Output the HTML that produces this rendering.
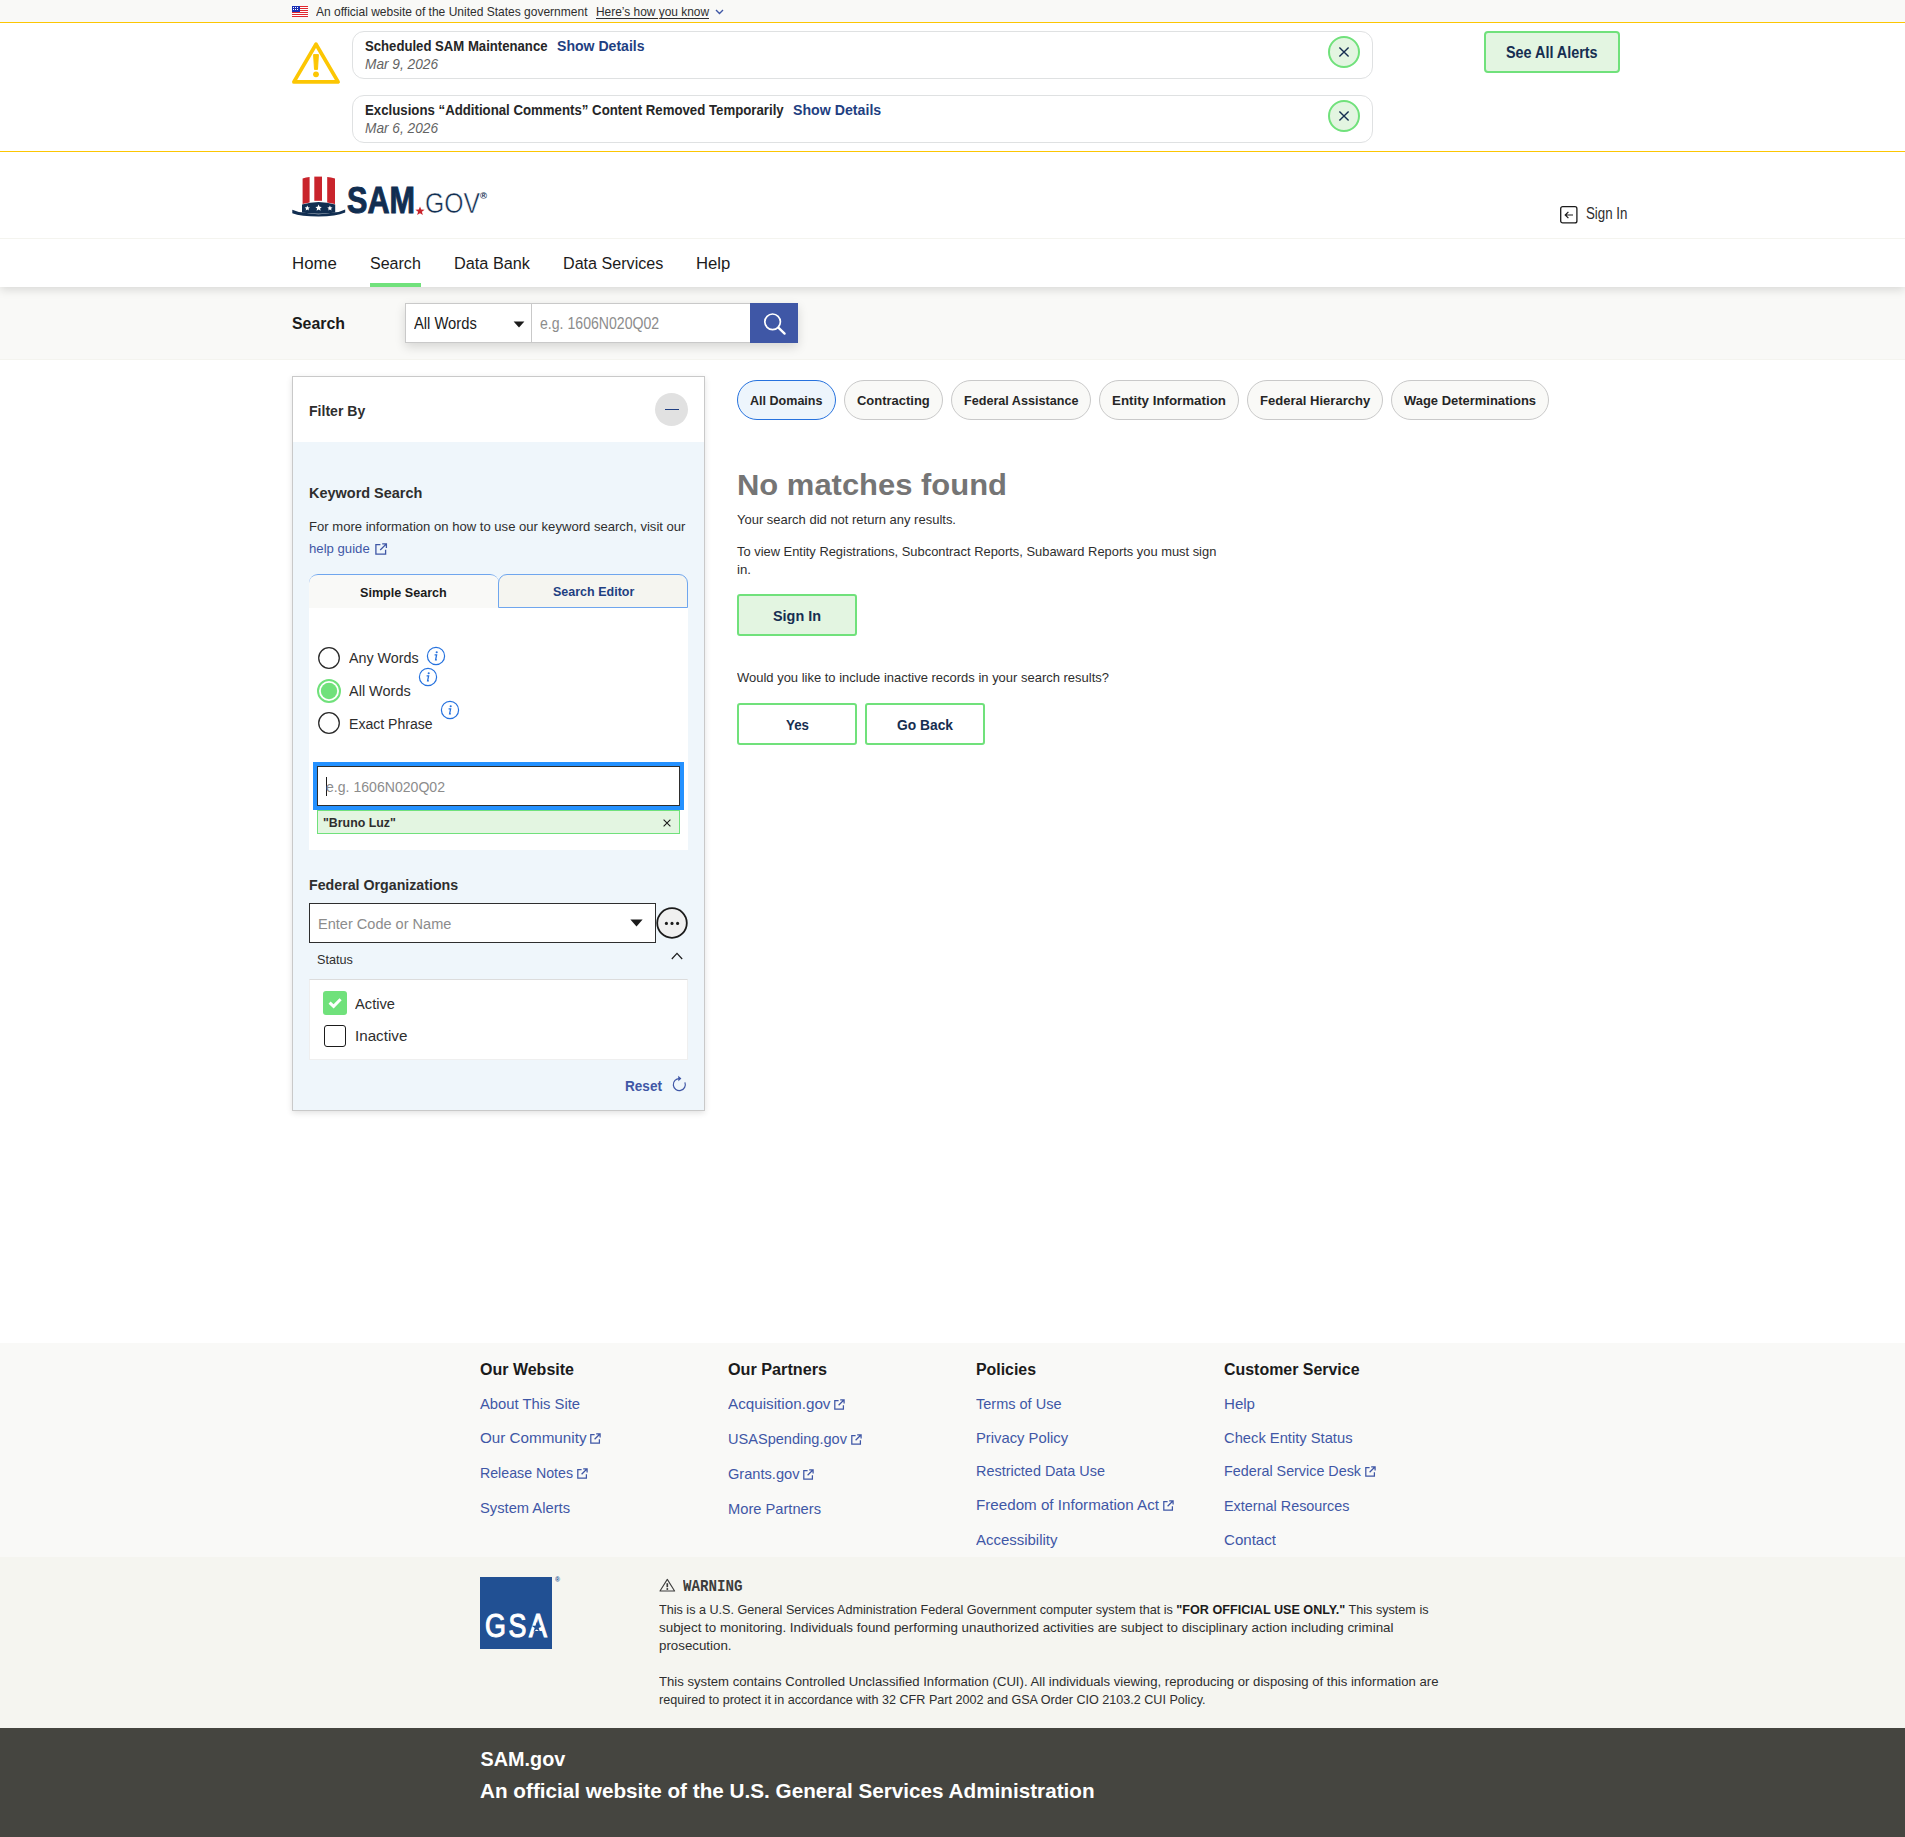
<!DOCTYPE html>
<html lang="en">
<head>
<meta charset="utf-8">
<title>SAM.gov | Search</title>
<style>
html,body{margin:0;padding:0}
body{width:1905px;height:1837px;position:relative;overflow:hidden;background:#fff;
font-family:"Liberation Sans", sans-serif;color:#1b1b1b}
#p div,#p svg,#p span{position:absolute;box-sizing:border-box}
#p span{white-space:nowrap;line-height:1;transform-origin:0 0;display:block}
#p svg{overflow:visible}
#p u{text-decoration-thickness:1px;text-underline-offset:2px}
</style>
</head>
<body>
<div id="p">
<div style="left:0px;top:0px;width:1905px;height:22px;background:#f9f9f7"></div>
<svg style="left:292px;top:6px" width="16" height="11" viewBox="0 0 16 11">
<rect width="16" height="11" fill="#fff"/>
<g fill="#e0282f"><rect y="0" width="16" height="1"/><rect y="2" width="16" height="1"/><rect y="4" width="16" height="1"/><rect y="6" width="16" height="1"/><rect y="8" width="16" height="1"/><rect y="10" width="16" height="1"/></g>
<rect width="8" height="6" fill="#1b2fb5"/>
<g fill="#fff"><rect x="1" y="1" width="1" height="1"/><rect x="3" y="1" width="1" height="1"/><rect x="5" y="1" width="1" height="1"/><rect x="1" y="3" width="1" height="1"/><rect x="3" y="3" width="1" height="1"/><rect x="5" y="3" width="1" height="1"/></g>
</svg>
<svg style="left:715px;top:9px" width="9" height="6" viewBox="0 0 9 6"><path d="M1 1 L4.5 4.5 L8 1" fill="none" stroke="#3f57a6" stroke-width="1.4"/></svg>
<div style="left:0px;top:22px;width:1905px;height:1px;background:#fcc603"></div>
<div style="left:0px;top:151px;width:1905px;height:1px;background:#fcc603"></div>
<svg style="left:292px;top:42px" width="48" height="42" viewBox="0 0 48 42">
<path d="M24 2.2 L46.1 39.9 L1.9 39.9 Z" fill="none" stroke="#fcc603" stroke-width="3.7" stroke-linejoin="round"/>
<path d="M21.6 12.6 H26.4 L25.5 27.4 H22.5 Z" fill="#fcc603" stroke="#fcc603" stroke-width="1" stroke-linejoin="round"/>
<circle cx="24" cy="32.3" r="2.9" fill="#fcc603"/></svg>
<div style="left:352px;top:31px;width:1021px;height:48px;border:1px solid #dfe1e2;border-radius:12px;background:#fff"></div>
<svg style="left:1328px;top:36px" width="32" height="32" viewBox="0 0 32 32">
<circle cx="16" cy="16" r="15" fill="#e3f5e1" stroke="#70e17b" stroke-width="2"/>
<path d="M11.4 11.4 L20.6 20.6 M20.6 11.4 L11.4 20.6" stroke="#162e51" stroke-width="1.4"/></svg>
<div style="left:352px;top:95px;width:1021px;height:48px;border:1px solid #dfe1e2;border-radius:12px;background:#fff"></div>
<svg style="left:1328px;top:100px" width="32" height="32" viewBox="0 0 32 32">
<circle cx="16" cy="16" r="15" fill="#e3f5e1" stroke="#70e17b" stroke-width="2"/>
<path d="M11.4 11.4 L20.6 20.6 M20.6 11.4 L11.4 20.6" stroke="#162e51" stroke-width="1.4"/></svg>
<div style="left:1484px;top:31px;width:136px;height:42px;border:2px solid #70e17b;border-radius:4px;background:#e3f5e1"></div>
<div style="left:0px;top:238px;width:1905px;height:1px;background:#f4f4ef"></div>
<svg style="left:292px;top:175.6px" width="54" height="41" viewBox="0 0 54 41">
<path d="M10.6 2.6 Q14 1.2 17.6 1.0 L17.6 26.5 Q14 27 10.6 28 Z" fill="#c9242c"/>
<path d="M22.3 0.6 L30 0.6 L30 24.8 L22.3 24.8 Z" fill="#c9242c"/>
<path d="M35.2 1.0 Q39 1.2 43 2.6 L43 28 Q39 27 35.2 26.5 Z" fill="#c9242c"/>
<path d="M10 28.6 Q26.5 23.4 43.2 28.6 L43.2 36.6 Q26.5 39 10 36.6 Z" fill="#112e51"/>
<path d="M0.3 33.8 Q6 36.4 12 36.6 Q26.5 40 41 36.6 Q47 36.4 53.2 33.4 L53.2 36.4 Q44 40.4 26.5 40.6 Q9 40.4 0.3 37.2 Z" fill="#112e51"/>
<g fill="#fff">
<path d="M15.3 29.6l.8 1.7 1.8.2-1.4 1.2.4 1.8-1.6-1-1.6 1 .4-1.8-1.4-1.2 1.8-.2z"/>
<path d="M26.6 28.6l1 2.1 2.2.3-1.7 1.5.5 2.2-2-1.2-2 1.2.5-2.2-1.7-1.5 2.2-.3z"/>
<path d="M37.9 29.6l.8 1.7 1.8.2-1.4 1.2.4 1.8-1.6-1-1.6 1 .4-1.8-1.4-1.2 1.8-.2z"/>
</g></svg>
<svg style="left:415px;top:206px" width="10" height="10" viewBox="0 0 10 10"><path d="M5 .4l1.2 3.2 3.4.1-2.7 2.1 1 3.3L5 7.2 2.1 9.1l1-3.3L.4 3.7l3.4-.1z" fill="#c9242c"/></svg>
<svg style="left:1560px;top:206px" width="18" height="18" viewBox="0 0 18 18">
<rect x=".7" y=".7" width="16.2" height="16.2" rx="2" fill="none" stroke="#1b1b1b" stroke-width="1.3"/>
<path d="M13 9 H5.4 M8.4 5.8 L5.2 9 L8.4 12.2" fill="none" stroke="#1b1b1b" stroke-width="1.2"/></svg>
<div style="left:0px;top:287px;width:1905px;height:72px;background:#f9f9f7"></div>
<div style="left:0px;top:359px;width:1905px;height:1px;background:#f4f4ef"></div>
<div style="left:0px;top:239px;width:1905px;height:48px;background:#fff;box-shadow:0 3px 9px rgba(0,0,0,.13);clip-path:inset(0 0 -30px 0)"></div>
<div style="left:370px;top:283px;width:51px;height:4px;background:#70e17b"></div>
<div style="left:405px;top:303px;width:393px;height:40px;box-shadow:0 4px 10px rgba(0,0,0,.14);background:#fff"></div>
<div style="left:405px;top:303px;width:127px;height:40px;border:1px solid #c9c9c9;background:#fff"></div>
<div style="left:531px;top:303px;width:220px;height:40px;border:1px solid #c9c9c9;background:#fff"></div>
<svg style="left:513px;top:321px" width="12" height="7" viewBox="0 0 12 7"><path d="M.6 .6 H11.4 L6 6.4 Z" fill="#1b1b1b"/></svg>
<div style="left:750px;top:303px;width:48px;height:40px;background:#3f57a6"></div>
<svg style="left:762px;top:311px" width="26" height="26" viewBox="0 0 26 26">
<circle cx="10.6" cy="10.8" r="7.8" fill="none" stroke="#fff" stroke-width="1.7"/>
<path d="M16.4 16.6 L22.6 22.6" stroke="#fff" stroke-width="2.3" stroke-linecap="round"/></svg>
<div style="left:292px;top:376px;width:413px;height:735px;border:1px solid #c9c9c9;background:#eff6fb;box-shadow:0 2px 6px rgba(0,0,0,.12)"></div>
<div style="left:293px;top:377px;width:411px;height:65px;background:#fff"></div>
<div style="left:655px;top:393px;width:33px;height:33px;border-radius:50%;background:#e1e1e1"></div>
<div style="left:664.5px;top:408.5px;width:14.5px;height:1.2px;background:#1f3f82"></div>
<svg style="left:374.5px;top:542.5px" width="13" height="12" viewBox="0 0 13 12">
<path d="M5.4 1.6 H.9 V11.1 H10.6 V6.8" fill="none" stroke="#3f57a6" stroke-width="1.3"/>
<path d="M7.2 .9 H11.4 V5 M11.4 .9 L5.2 7" fill="none" stroke="#3f57a6" stroke-width="1.3"/></svg>
<div style="left:309px;top:607px;width:379px;height:243px;background:#fff"></div>
<div style="left:309px;top:574px;width:190px;height:34px;background:#f9f9f7;border-top:1px solid #6fa6ee;border-radius:9px 9px 0 0"></div>
<div style="left:498px;top:574px;width:190px;height:34px;background:#f5f5f0;border:1px solid #6fa6ee;border-radius:9px 9px 0 0"></div>
<svg style="left:317px;top:645.5px" width="24" height="24" viewBox="0 0 24 24">
<circle cx="12" cy="12" r="10.3" fill="#fff" stroke="#2b2b2b" stroke-width="1.3"/></svg>
<svg style="left:317px;top:678.5px" width="24" height="24" viewBox="0 0 24 24">
<circle cx="12" cy="12" r="11" fill="#fff" stroke="#70e17b" stroke-width="2"/><circle cx="12" cy="12" r="8.2" fill="#70e17b"/></svg>
<svg style="left:317px;top:711px" width="24" height="24" viewBox="0 0 24 24">
<circle cx="12" cy="12" r="10.3" fill="#fff" stroke="#2b2b2b" stroke-width="1.3"/></svg>
<svg style="left:426.3px;top:646px" width="20" height="20" viewBox="0 0 20 20">
<circle cx="10" cy="10" r="8.6" fill="#fff" stroke="#2672de" stroke-width="1.2"/>
<circle cx="10.7" cy="6.2" r="1.05" fill="#2672de"/>
<path d="M8.6 8.8 H10.6 L9.6 13.8 H10.9" fill="none" stroke="#2672de" stroke-width="1.3"/></svg>
<svg style="left:418.2px;top:667px" width="20" height="20" viewBox="0 0 20 20">
<circle cx="10" cy="10" r="8.6" fill="#fff" stroke="#2672de" stroke-width="1.2"/>
<circle cx="10.7" cy="6.2" r="1.05" fill="#2672de"/>
<path d="M8.6 8.8 H10.6 L9.6 13.8 H10.9" fill="none" stroke="#2672de" stroke-width="1.3"/></svg>
<svg style="left:440px;top:700px" width="20" height="20" viewBox="0 0 20 20">
<circle cx="10" cy="10" r="8.6" fill="#fff" stroke="#2672de" stroke-width="1.2"/>
<circle cx="10.7" cy="6.2" r="1.05" fill="#2672de"/>
<path d="M8.6 8.8 H10.6 L9.6 13.8 H10.9" fill="none" stroke="#2672de" stroke-width="1.3"/></svg>
<div style="left:313px;top:762px;width:371px;height:48px;background:#2491ff"></div>
<div style="left:317px;top:766px;width:363px;height:40px;background:#fff;border:1px solid #2e2e2e"></div>
<div style="left:326px;top:777px;width:1px;height:19px;background:#1b1b1b"></div>
<div style="left:317px;top:810px;width:363px;height:24px;background:#e3f5e1;border:1px solid #70e17b"></div>
<svg style="left:663px;top:819px" width="8" height="8" viewBox="0 0 8 8"><path d="M.6 .6 L7.4 7.4 M7.4 .6 L.6 7.4" stroke="#1b1b1b" stroke-width="1.1"/></svg>
<div style="left:309px;top:903px;width:347px;height:40px;background:#fff;border:1px solid #2e2e2e"></div>
<svg style="left:629.5px;top:919px" width="13" height="8" viewBox="0 0 13 8"><path d="M.4 .4 H12.6 L6.5 7.6 Z" fill="#1b1b1b"/></svg>
<svg style="left:656px;top:907px" width="32" height="32" viewBox="0 0 32 32">
<circle cx="16" cy="16" r="14.8" fill="#f0f0f0" stroke="#1b1b1b" stroke-width="1.8"/>
<circle cx="10.4" cy="16.4" r="1.55" fill="#1b1b1b"/><circle cx="16" cy="16.4" r="1.55" fill="#1b1b1b"/><circle cx="21.6" cy="16.4" r="1.55" fill="#1b1b1b"/></svg>
<svg style="left:670.5px;top:952px" width="12" height="8" viewBox="0 0 12 8"><path d="M.8 7 L6 1.4 L11.2 7" fill="none" stroke="#1b1b1b" stroke-width="1.2"/></svg>
<div style="left:309px;top:979px;width:379px;height:81px;background:#fff;border:1px solid #efefef;border-top-color:#dcdcdc"></div>
<svg style="left:323px;top:991px" width="24" height="24" viewBox="0 0 24 24">
<rect width="24" height="24" rx="3" fill="#70e17b"/>
<path d="M6.6 11.6 L10.6 15.4 L17.6 8.2" fill="none" stroke="#fff" stroke-width="3"/></svg>
<div style="left:324px;top:1025px;width:22px;height:22px;background:#fff;border:1.6px solid #1b1b1b;border-radius:3px"></div>
<svg style="left:671.2px;top:1075px" width="16" height="18" viewBox="0 0 16 18">
<path d="M8.6 3.6 A6 6 0 1 0 13.9 7.4" fill="none" stroke="#3f57a6" stroke-width="1.2"/>
<path d="M7.2 .8 L10.4 3.6 L7.4 6.2 Z" fill="#3f57a6"/></svg>
<div style="left:737px;top:380px;width:98.5px;height:40px;border:1px solid #2672de;border-radius:20px;background:#edf5fc"></div>
<div style="left:843.8px;top:380px;width:98.8px;height:40px;border:1px solid #c9c9c9;border-radius:20px;background:#f9f9f7"></div>
<div style="left:951px;top:380px;width:140.4px;height:40px;border:1px solid #c9c9c9;border-radius:20px;background:#f9f9f7"></div>
<div style="left:1098.8px;top:380px;width:139.9px;height:40px;border:1px solid #c9c9c9;border-radius:20px;background:#f9f9f7"></div>
<div style="left:1247px;top:380px;width:136.2px;height:40px;border:1px solid #c9c9c9;border-radius:20px;background:#f9f9f7"></div>
<div style="left:1390.7px;top:380px;width:158px;height:40px;border:1px solid #c9c9c9;border-radius:20px;background:#f9f9f7"></div>
<div style="left:737px;top:594px;width:120px;height:42px;border:2px solid #70e17b;border-radius:3px;background:#e3f5e1"></div>
<div style="left:737px;top:703px;width:120px;height:42px;border:2px solid #70e17b;border-radius:3px;background:#fff"></div>
<div style="left:865px;top:703px;width:120px;height:42px;border:2px solid #70e17b;border-radius:3px;background:#fff"></div>
<div style="left:0px;top:1343px;width:1905px;height:214px;background:#f9f9f7"></div>
<div style="left:0px;top:1557px;width:1905px;height:171px;background:#f5f5f0"></div>
<div style="left:0px;top:1728px;width:1905px;height:109px;background:#454540"></div>
<svg style="left:590.3px;top:1433.4px" width="11" height="11" viewBox="0 0 11 11">
<path d="M4.6 1.5 H.8 V10.1 H9.4 V6.2" fill="none" stroke="#3f57a6" stroke-width="1.25"/>
<path d="M6.2 .8 H10.1 V4.6 M10.1 .8 L4.6 6.3" fill="none" stroke="#3f57a6" stroke-width="1.25"/></svg>
<svg style="left:576.8px;top:1468.4px" width="11" height="11" viewBox="0 0 11 11">
<path d="M4.6 1.5 H.8 V10.1 H9.4 V6.2" fill="none" stroke="#3f57a6" stroke-width="1.25"/>
<path d="M6.2 .8 H10.1 V4.6 M10.1 .8 L4.6 6.3" fill="none" stroke="#3f57a6" stroke-width="1.25"/></svg>
<svg style="left:834.3px;top:1399.1000000000001px" width="11" height="11" viewBox="0 0 11 11">
<path d="M4.6 1.5 H.8 V10.1 H9.4 V6.2" fill="none" stroke="#3f57a6" stroke-width="1.25"/>
<path d="M6.2 .8 H10.1 V4.6 M10.1 .8 L4.6 6.3" fill="none" stroke="#3f57a6" stroke-width="1.25"/></svg>
<svg style="left:850.8px;top:1434.4px" width="11" height="11" viewBox="0 0 11 11">
<path d="M4.6 1.5 H.8 V10.1 H9.4 V6.2" fill="none" stroke="#3f57a6" stroke-width="1.25"/>
<path d="M6.2 .8 H10.1 V4.6 M10.1 .8 L4.6 6.3" fill="none" stroke="#3f57a6" stroke-width="1.25"/></svg>
<svg style="left:803.3px;top:1469.4px" width="11" height="11" viewBox="0 0 11 11">
<path d="M4.6 1.5 H.8 V10.1 H9.4 V6.2" fill="none" stroke="#3f57a6" stroke-width="1.25"/>
<path d="M6.2 .8 H10.1 V4.6 M10.1 .8 L4.6 6.3" fill="none" stroke="#3f57a6" stroke-width="1.25"/></svg>
<svg style="left:1162.8px;top:1500.4px" width="11" height="11" viewBox="0 0 11 11">
<path d="M4.6 1.5 H.8 V10.1 H9.4 V6.2" fill="none" stroke="#3f57a6" stroke-width="1.25"/>
<path d="M6.2 .8 H10.1 V4.6 M10.1 .8 L4.6 6.3" fill="none" stroke="#3f57a6" stroke-width="1.25"/></svg>
<svg style="left:1364.8px;top:1466.4px" width="11" height="11" viewBox="0 0 11 11">
<path d="M4.6 1.5 H.8 V10.1 H9.4 V6.2" fill="none" stroke="#3f57a6" stroke-width="1.25"/>
<path d="M6.2 .8 H10.1 V4.6 M10.1 .8 L4.6 6.3" fill="none" stroke="#3f57a6" stroke-width="1.25"/></svg>
<div style="left:480px;top:1577px;width:72px;height:72px;background:#215093"></div>
<svg style="left:659px;top:1578px" width="17" height="14" viewBox="0 0 17 14">
<path d="M8.3 1.4 L15.6 13 H1 Z" fill="none" stroke="#3d3d3d" stroke-width="1.1" stroke-linejoin="round"/>
<path d="M8.3 5.2 V9.2" stroke="#3d3d3d" stroke-width="1.7"/><circle cx="8.3" cy="11" r="1" fill="#3d3d3d"/></svg>
<span style="left:316.00px;top:6.00px;font-size:12.1px;color:#2e2e2e;transform:scaleX(0.9931);">An official website of the United States government</span>
<span style="left:596.00px;top:6.00px;font-size:12.1px;color:#2e2e2e;transform:scaleX(0.9849);"><u>Here’s how you know</u></span>
<span style="left:365.40px;top:39.00px;font-size:14.6px;font-weight:700;color:#262626;transform:scaleX(0.9002);">Scheduled SAM Maintenance</span>
<span style="left:556.70px;top:39.00px;font-size:14.6px;font-weight:700;color:#1f3f82;transform:scaleX(0.9645);">Show Details</span>
<span style="left:365.40px;top:57.00px;font-size:14.6px;color:#636363;font-style:italic;transform:scaleX(0.9372);">Mar 9, 2026</span>
<span style="left:365.40px;top:103.00px;font-size:14.6px;font-weight:700;color:#262626;transform:scaleX(0.9064);">Exclusions “Additional Comments” Content Removed Temporarily</span>
<span style="left:792.70px;top:103.00px;font-size:14.6px;font-weight:700;color:#1f3f82;transform:scaleX(0.9711);">Show Details</span>
<span style="left:365.40px;top:121.00px;font-size:14.6px;color:#636363;font-style:italic;transform:scaleX(0.9372);">Mar 6, 2026</span>
<span style="left:1506.40px;top:45.00px;font-size:16px;font-weight:700;color:#162e51;transform:scaleX(0.8983);">See All Alerts</span>
<span style="left:346.50px;top:182.00px;font-size:37.8px;font-weight:700;color:#112e51;transform:scaleX(0.8095);-webkit-text-stroke:1px #112e51;">SAM</span>
<span style="left:425.40px;top:188.00px;font-size:30px;color:#112e51;transform:scaleX(0.8247);-webkit-text-stroke:0.55px #fff;">GOV</span>
<span style="left:480.00px;top:192.00px;font-size:9px;font-weight:700;color:#112e51;transform:scaleX(1.0541);">®</span>
<span style="left:1586.00px;top:206.00px;font-size:15.8px;color:#2e2e2e;transform:scaleX(0.8417);">Sign In</span>
<span style="left:292.40px;top:256.00px;font-size:16.7px;transform:scaleX(1.0064);">Home</span>
<span style="left:370.00px;top:256.00px;font-size:16.7px;transform:scaleX(0.9608);">Search</span>
<span style="left:454.00px;top:256.00px;font-size:16.7px;transform:scaleX(0.9753);">Data Bank</span>
<span style="left:562.70px;top:256.00px;font-size:16.7px;transform:scaleX(0.9656);">Data Services</span>
<span style="left:696.00px;top:256.00px;font-size:16.7px;">Help</span>
<span style="left:292.40px;top:316.00px;font-size:16.7px;font-weight:700;transform:scaleX(0.9520);">Search</span>
<span style="left:414.30px;top:316.00px;font-size:15.6px;transform:scaleX(0.9452);">All Words</span>
<span style="left:540.40px;top:316.00px;font-size:15.6px;color:#8c8c8c;transform:scaleX(0.9044);">e.g. 1606N020Q02</span>
<span style="left:309.30px;top:403.00px;font-size:15.2px;font-weight:700;color:#2e2e2e;transform:scaleX(0.9249);">Filter By</span>
<span style="left:309.30px;top:486.00px;font-size:14.8px;font-weight:700;color:#2e2e2e;transform:scaleX(0.9778);">Keyword Search</span>
<span style="left:309.30px;top:520.00px;font-size:13px;color:#2e2e2e;transform:scaleX(1.0059);">For more information on how to use our keyword search, visit our</span>
<span style="left:309.30px;top:542.00px;font-size:13px;color:#3f57a6;transform:scaleX(1.0117);">help guide</span>
<span style="left:359.90px;top:586.00px;font-size:13.1px;font-weight:700;transform:scaleX(0.9618);">Simple Search</span>
<span style="left:552.50px;top:585.00px;font-size:13.1px;font-weight:700;color:#1f3f82;transform:scaleX(0.9549);">Search Editor</span>
<span style="left:349.30px;top:650.00px;font-size:15.2px;color:#2e2e2e;transform:scaleX(0.9419);">Any Words</span>
<span style="left:349.30px;top:683.00px;font-size:15.2px;color:#2e2e2e;transform:scaleX(0.9536);">All Words</span>
<span style="left:349.30px;top:716.00px;font-size:15.2px;color:#2e2e2e;transform:scaleX(0.9266);">Exact Phrase</span>
<span style="left:326.40px;top:779.00px;font-size:15.4px;color:#8c8c8c;transform:scaleX(0.9148);">e.g. 1606N020Q02</span>
<span style="left:323.40px;top:817.00px;font-size:12.6px;font-weight:700;color:#2e2e2e;transform:scaleX(0.9811);">"Bruno Luz"</span>
<span style="left:309.30px;top:878.00px;font-size:14.8px;font-weight:700;color:#2e2e2e;transform:scaleX(0.9601);">Federal Organizations</span>
<span style="left:318.20px;top:916.00px;font-size:15.4px;color:#8c8c8c;transform:scaleX(0.9451);">Enter Code or Name</span>
<span style="left:317.40px;top:953.00px;font-size:13px;color:#2e2e2e;transform:scaleX(0.9713);">Status</span>
<span style="left:355.00px;top:996.00px;font-size:15.2px;color:#2e2e2e;transform:scaleX(0.9671);">Active</span>
<span style="left:355.00px;top:1028.00px;font-size:15.2px;color:#2e2e2e;">Inactive</span>
<span style="left:625.30px;top:1078.00px;font-size:15.2px;font-weight:700;color:#3f57a6;transform:scaleX(0.8943);">Reset</span>
<span style="left:750.00px;top:394.00px;font-size:13.1px;font-weight:700;color:#262626;transform:scaleX(0.9581);">All Domains</span>
<span style="left:856.80px;top:394.00px;font-size:13.1px;font-weight:700;color:#262626;transform:scaleX(0.9909);">Contracting</span>
<span style="left:964.00px;top:394.00px;font-size:13.1px;font-weight:700;color:#262626;transform:scaleX(0.9624);">Federal Assistance</span>
<span style="left:1111.80px;top:394.00px;font-size:13.1px;font-weight:700;color:#262626;transform:scaleX(1.0167);">Entity Information</span>
<span style="left:1260.00px;top:394.00px;font-size:13.1px;font-weight:700;color:#262626;transform:scaleX(0.9960);">Federal Hierarchy</span>
<span style="left:1403.70px;top:394.00px;font-size:13.1px;font-weight:700;color:#262626;transform:scaleX(0.9896);">Wage Determinations</span>
<span style="left:737.40px;top:470.00px;font-size:29.6px;font-weight:700;color:#757575;transform:scaleX(1.0459);">No matches found</span>
<span style="left:737.00px;top:514.00px;font-size:12.9px;color:#2e2e2e;transform:scaleX(1.0075);">Your search did not return any results.</span>
<span style="left:737.00px;top:546.00px;font-size:12.9px;color:#2e2e2e;">To view Entity Registrations, Subcontract Reports, Subaward Reports you must sign</span>
<span style="left:737.00px;top:564.00px;font-size:12.9px;color:#2e2e2e;transform:scaleX(1.0275);">in.</span>
<span style="left:773.20px;top:608.00px;font-size:15.4px;font-weight:700;color:#162e51;transform:scaleX(0.9354);">Sign In</span>
<span style="left:737.00px;top:672.00px;font-size:12.9px;color:#2e2e2e;transform:scaleX(1.0068);">Would you like to include inactive records in your search results?</span>
<span style="left:785.60px;top:717.00px;font-size:15.4px;font-weight:700;color:#162e51;transform:scaleX(0.8664);">Yes</span>
<span style="left:897.00px;top:717.00px;font-size:15.4px;font-weight:700;color:#162e51;transform:scaleX(0.8967);">Go Back</span>
<span style="left:480.00px;top:1362.00px;font-size:16px;font-weight:700;">Our Website</span>
<span style="left:480.00px;top:1397.00px;font-size:14.8px;color:#3f57a6;">About This Site</span>
<span style="left:480.00px;top:1431.00px;font-size:14.8px;color:#3f57a6;transform:scaleX(1.0279);">Our Community</span>
<span style="left:480.00px;top:1466.00px;font-size:14.8px;color:#3f57a6;transform:scaleX(0.9581);">Release Notes</span>
<span style="left:480.00px;top:1501.00px;font-size:14.8px;color:#3f57a6;transform:scaleX(0.9950);">System Alerts</span>
<span style="left:728.00px;top:1362.00px;font-size:16px;font-weight:700;transform:scaleX(1.0121);">Our Partners</span>
<span style="left:728.00px;top:1397.00px;font-size:14.8px;color:#3f57a6;transform:scaleX(1.0298);">Acquisition.gov</span>
<span style="left:728.00px;top:1432.00px;font-size:14.8px;color:#3f57a6;transform:scaleX(0.9840);">USASpending.gov</span>
<span style="left:728.00px;top:1467.00px;font-size:14.8px;color:#3f57a6;transform:scaleX(0.9879);">Grants.gov</span>
<span style="left:728.00px;top:1502.00px;font-size:14.8px;color:#3f57a6;transform:scaleX(0.9920);">More Partners</span>
<span style="left:976.00px;top:1362.00px;font-size:16px;font-weight:700;transform:scaleX(0.9920);">Policies</span>
<span style="left:976.00px;top:1397.00px;font-size:14.8px;color:#3f57a6;transform:scaleX(0.9810);">Terms of Use</span>
<span style="left:976.00px;top:1431.00px;font-size:14.8px;color:#3f57a6;">Privacy Policy</span>
<span style="left:976.00px;top:1464.00px;font-size:14.8px;color:#3f57a6;transform:scaleX(0.9743);">Restricted Data Use</span>
<span style="left:976.00px;top:1498.00px;font-size:14.8px;color:#3f57a6;transform:scaleX(1.0254);">Freedom of Information Act</span>
<span style="left:976.00px;top:1533.00px;font-size:14.8px;color:#3f57a6;transform:scaleX(1.0112);">Accessibility</span>
<span style="left:1224.00px;top:1362.00px;font-size:16px;font-weight:700;transform:scaleX(0.9959);">Customer Service</span>
<span style="left:1224.00px;top:1397.00px;font-size:14.8px;color:#3f57a6;transform:scaleX(1.0185);">Help</span>
<span style="left:1224.00px;top:1431.00px;font-size:14.8px;color:#3f57a6;transform:scaleX(0.9952);">Check Entity Status</span>
<span style="left:1224.00px;top:1464.00px;font-size:14.8px;color:#3f57a6;transform:scaleX(0.9685);">Federal Service Desk</span>
<span style="left:1224.00px;top:1499.00px;font-size:14.8px;color:#3f57a6;transform:scaleX(0.9719);">External Resources</span>
<span style="left:1224.00px;top:1533.00px;font-size:14.8px;color:#3f57a6;transform:scaleX(1.0196);">Contact</span>
<span style="left:484.60px;top:1610.00px;font-size:32.6px;color:#fff;transform:scaleX(0.8239);letter-spacing:3.2px;-webkit-text-stroke:1.1px #fff;">GSA</span>
<span style="left:555.00px;top:1577.00px;font-size:6.5px;font-weight:700;color:#215093;transform:scaleX(1.0423);">®</span>
<span style="left:683.40px;top:1580.00px;font-size:15.6px;font-weight:700;color:#3d3d3d;font-family:'Liberation Mono', monospace;transform:scaleX(0.9097);">WARNING</span>
<span style="left:659.40px;top:1604.00px;font-size:12.4px;color:#2e2e2e;transform:scaleX(1.0180);">This is a U.S. General Services Administration Federal Government computer system that is <b style="color:#1b1b1b">"FOR OFFICIAL USE ONLY."</b> This system is</span>
<span style="left:659.40px;top:1622.00px;font-size:12.4px;color:#2e2e2e;transform:scaleX(1.0794);">subject to monitoring. Individuals found performing unauthorized activities are subject to disciplinary action including criminal</span>
<span style="left:659.40px;top:1640.00px;font-size:12.4px;color:#2e2e2e;transform:scaleX(1.0738);">prosecution.</span>
<span style="left:659.40px;top:1676.00px;font-size:12.4px;color:#2e2e2e;transform:scaleX(1.0598);">This system contains Controlled Unclassified Information (CUI). All individuals viewing, reproducing or disposing of this information are</span>
<span style="left:659.40px;top:1694.00px;font-size:12.4px;color:#2e2e2e;transform:scaleX(1.0152);">required to protect it in accordance with 32 CFR Part 2002 and GSA Order CIO 2103.2 CUI Policy.</span>
<span style="left:480.60px;top:1750.00px;font-size:19.8px;font-weight:700;color:#fff;">SAM.gov</span>
<span style="left:480.00px;top:1781.00px;font-size:20.4px;font-weight:700;color:#fff;transform:scaleX(1.0151);">An official website of the U.S. General Services Administration</span>
<svg style="left:529.5px;top:1621px" width="12.5" height="12.5" viewBox="0 0 16 16"><path d="M8.6 1.2 L10.2 6 H15 L11.1 8.9 L12.6 13.8 L8.6 10.8 L4.4 13.8 L6 8.9 L2.2 6 H7 Z" fill="#215093"/></svg>
</div>
</body>
</html>
